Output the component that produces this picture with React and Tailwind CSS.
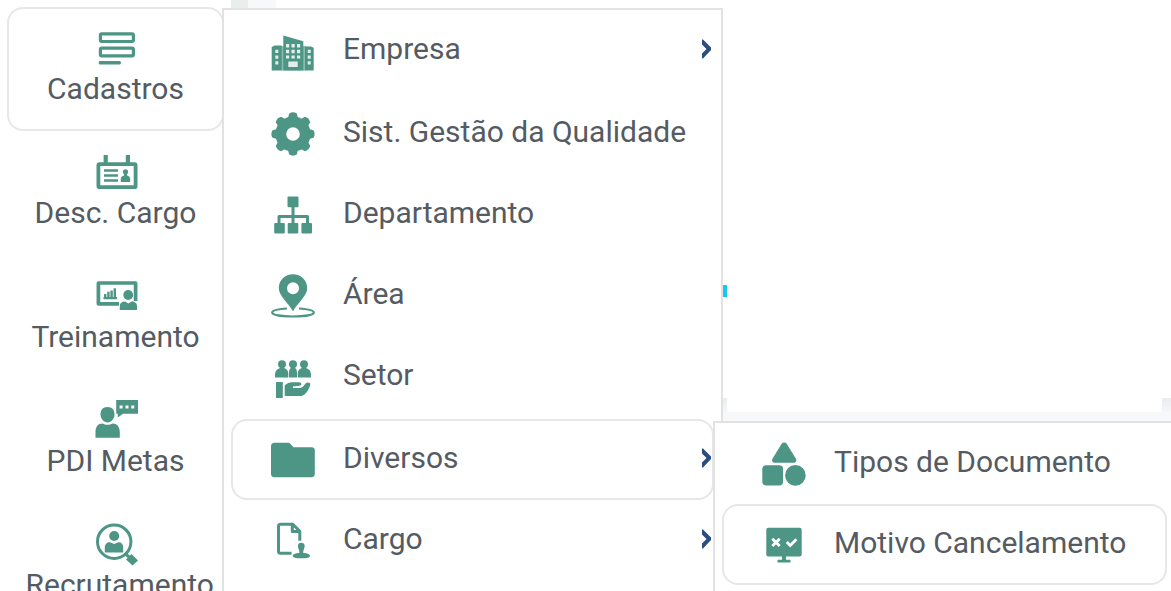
import React from "react";
import clsx from "clsx";

/* Icons share a 44x44 box and take the current text colour. */
function Icon({ children }) {
  return (
    <svg viewBox="0 0 44 44" className="size-11 shrink-0 text-[#4d9584]" fill="currentColor" aria-hidden="true">
      {children}
    </svg>
  );
}

const FormIcon = () => (
  <Icon>
    <g fill="none" stroke="currentColor" strokeWidth="3.2">
      <rect x="6.4" y="6.9" width="33" height="7.6" rx="1.4" />
      <rect x="6.4" y="21.2" width="33" height="7.6" rx="1.4" />
    </g>
    <rect x="4.8" y="34" width="22" height="3.4" rx="1.2" />
  </Icon>
);

const BadgeIcon = () => (
  <Icon>
    <rect x="4.4" y="13.2" width="37.2" height="23" rx="1" fill="none" stroke="currentColor" strokeWidth="3.8" />
    <path d="M9.6 4h4.2v8H9.6zM31.8 4H36v8h-4.2z" />
    <path d="M10 19.5h14M10 24.5h14M10 29.5h14" stroke="currentColor" strokeWidth="2.6" />
    <circle cx="31.5" cy="20.8" r="2.6" />
    <path d="M30 22h3v2.500c2 .3 3.200 1.600 3.200 3.600v3h-9.400v-3c0-2 1.200-3.300 3.200-3.600z" />
  </Icon>
);

const TrainingIcon = () => (
  <Icon>
    <path d="M25 28.800H4.400V8h37.200v18" fill="none" stroke="currentColor" strokeWidth="3.700" strokeLinejoin="round" />
    <path d="M9.500 22h13.500v2.200H9.500zM10 19h2.400v4H10zM13.200 16.800h2.400v6h-2.400zM16.400 15.500h2.400v8h-2.400zM19.600 13.300H22v10h-2.400z" />
    <circle cx="34.200" cy="20" r="4.900" />
    <path d="M25.800 35v-4c0-3 2-4.600 5.200-4.600l3.300 2 3.300-2c3.200 0 5.400 1.600 5.400 4.600v4z" />
  </Icon>
);

const GoalsIcon = () => (
  <Icon>
    <path d="M13.500 8c5 0 7 3 7 7.500 0 4-3.200 8-7 8s-7-4-7-8C6.500 11 8.500 8 13.500 8z" />
    <path d="M1.500 38.700v-5.500c0-5.500 2.500-8.700 7-8.700 3 1.800 7 1.800 10 0 4.500 0 7.300 3.200 7.300 8.700v5.500z" />
    <path d="M22.200 1H44v13.700H29L23.800 18.500v-3.800h-1.600z" />
    <path d="M25.600 6.600h3v3h-3zM31.500 6.600h3v3h-3zM37.300 6.600h3v3h-3z" fill="#fff" />
  </Icon>
);

const RecruitIcon = () => (
  <Icon>
    <circle cx="20.200" cy="18.700" r="16.700" fill="none" stroke="currentColor" strokeWidth="3" />
    <circle cx="20.200" cy="13" r="5" />
    <path d="M10.800 29.500v-5c0-3.200 2-5.200 5.200-5.200l4.200 1.800 4.200-1.800c3.200 0 4.800 2 4.800 5.200v5z" />
    <path d="M31 30.500l4 3.500" stroke="currentColor" strokeWidth="3" />
    <path d="M37.500 31l6.500 6.500-5.500 5-6.500-6z" />
  </Icon>
);

const CompanyIcon = () => (
  <Icon>
    <path d="M10 17h25v24.500H10z" opacity=".65" />
    <path d="M.7 18l3-1.500h7v25h-10zM12.300 6.500l20 5.700v29.300h-20zM34 17.500h6l2.700 1.200v22.800H34z" />
    <path
      d="M15 15h3.200v3.500H15zM20.500 15h3.200v3.500h-3.200zM26 15h3.200v3.500H26zM15 20.700h3.200v3.500H15zM20.500 20.700h3.200v3.500h-3.200zM26 20.700h3.200v3.500H26zM15 26.400h3.200v3H15zM20.500 26.400h3.200v3h-3.200zM26 26.400h3.200v3H26zM17.300 32.500h9.400v5.500h-9.400z"
      fill="#e3efec"
    />
    <path
      d="M4.300 20.700h3v3.300h-3zM4.300 26.500h3v3.300h-3zM4.300 32.300h3v3.300h-3zM36.700 20.700h3v3.300h-3zM36.700 26.500h3v3.300h-3zM36.700 32.300h3v3.300h-3z"
      fill="#e3efec"
    />
  </Icon>
);

const GearIcon = () => (
  <Icon>
    <circle cx="22" cy="22" r="12.200" fill="none" stroke="currentColor" strokeWidth="10.800" />
    {[0, 45, 90, 135, 180, 225, 270, 315].map((deg) => (
      <path key={deg} d="M18.200 1.500Q22-.8 25.800 1.500L27.500 8h-11z" transform={`rotate(${deg} 22 22)`} />
    ))}
  </Icon>
);

const DepartmentIcon = () => (
  <Icon>
    <path d="M22 13v18M8 31v-7.500h28.500V31" fill="none" stroke="currentColor" strokeWidth="3" strokeLinejoin="round" />
    <rect x="16.500" y="3.500" width="11" height="10.800" rx="1" />
    <rect x="3.200" y="30" width="10.600" height="10.600" rx="1" />
    <rect x="16.700" y="30" width="10.600" height="10.600" rx="1" />
    <rect x="30.400" y="30" width="10.600" height="10.600" rx="1" />
  </Icon>
);

const AreaIcon = () => (
  <Icon>
    <path
      fillRule="evenodd"
      d="M22 .3c8 0 14.200 6 14.200 13.700C36.200 22 27 28.500 22 37.300 17 28.500 7.800 22 7.800 14 7.800 6.300 14 .3 22 .3zM22 8.200a6 6 0 1 0 0 12 6 6 0 0 0 0-12z"
    />
    <path d="M16 34.500C8 35 1.200 36.300 1.200 38.500c0 2.500 9.500 4 20.800 4s20.800-1.500 20.800-4c0-2.200-6.800-3.500-14.800-4" fill="none" stroke="currentColor" strokeWidth="2.200" />
  </Icon>
);

const SectorIcon = () => (
  <Icon>
    {[11, 22, 33].map((x) => (
      <circle key={x} cx={x} cy="9.200" r="4" />
    ))}
    <path d="M4 22.500v-3c0-3.500 2-5.500 5-6.500V11h4v2c2.500.8 4.300 2.500 4.300 5.500v4zM18 22.500v-4.200c0-2.800.4-4.500 2-5.300V11h4v2c1.600.8 2 2.500 2 5.300v4.200zM26.700 22.500v-4c0-3 1.800-4.700 4.300-5.500V11h4v2c3 1 5 3 5 6.500v3z" />
    <rect x="5" y="27" width="6.800" height="16" rx=".6" />
    <path d="M13.700 30.500c2.500-2.500 4.500-3.300 7.500-3.300h7c2.500 0 3 3.300.2 3.600l-6.400.7v1.400h7c4 0 4.500-5.400 8-5.400 2 0 2.700 1.200 2 3.200-2.500 7-6 10.300-10.500 10.300H13.700z" />
  </Icon>
);

const FolderIcon = () => (
  <Icon>
    <path d="M3.500 4.800h13.200c1.200 0 2 .4 2.800 1.200l3 3.200h18.200c2 0 3.100 1.200 3.100 3.100v23.700c0 2-1.200 3.200-3.100 3.200H3.200C1.200 39.200 0 38 0 36V8.300c0-2.200 1.300-3.500 3.500-3.500z" />
  </Icon>
);

const RoleIcon = () => (
  <Icon>
    <path d="M20.500 34.300H9.500c-1.300 0-2-.7-2-2V7.300c0-1.300.7-2 2-2h12.300l7 7v9.500M21.300 5.500v7h7.500" fill="none" stroke="currentColor" strokeWidth="3" strokeLinejoin="round" />
    <path d="M30.300 23.700c2.200 0 3.600 1.600 3.400 3.800-.2 2-1.500 3-1.500 6.500 4 .2 6.800 1.300 6.800 3 0 1.500-3.500 2.300-8.700 2.300s-8.600-.8-8.600-2.300c0-1.700 2.800-2.800 6.700-3 0-3.500-1.300-4.500-1.500-6.500-.2-2.200 1.200-3.800 3.400-3.800z" />
  </Icon>
);

const ShapesIcon = () => (
  <Icon>
    <path d="M19.500 2c1.300-2 4-2 5.300 0l9 14.500c1.300 2.200 0 4.300-2.500 4.300H13c-2.500 0-3.700-2.100-2.400-4.300z" />
    <rect x=".3" y="23.200" width="20.800" height="20.400" rx="4" />
    <circle cx="33.400" cy="33.400" r="10.300" />
  </Icon>
);

const MonitorIcon = () => (
  <Icon>
    <path d="M6.500 4.800h31c1.400 0 2.200.8 2.200 2.200v24.300c0 1.400-.8 2.200-2.200 2.200H24v3.300h4.500v2.700h-13v-2.700H20v-3.300H6.500c-1.400 0-2.200-.8-2.200-2.200V7c0-1.400.8-2.200 2.200-2.200z" />
    <path d="M10.300 15.800l7.400 7.200M17.700 15.800L10.300 23M24.800 19l3.400 3.500 6.300-6.300" fill="none" stroke="#fff" strokeWidth="2.800" />
  </Icon>
);

const Chevron = () => (
  <svg viewBox="0 0 10 20" className="h-5 w-2.5 shrink-0" fill="#2b4c7e" aria-hidden="true">
    <path d="M0 .5h1L9 8.500v2.500L1 19.500H0V14.500L4.500 10 0 5.500z" />
  </svg>
);

const SIDEBAR = [
  { label: "Cadastros", icon: FormIcon, active: true },
  { label: "Desc. Cargo", icon: BadgeIcon },
  { label: "Treinamento", icon: TrainingIcon },
  { label: "PDI Metas", icon: GoalsIcon },
  { label: "Recrutamento", icon: RecruitIcon },
];

const CADASTROS = [
  [{ label: "Empresa", icon: CompanyIcon, hasSub: true }],
  [
    { label: "Sist. Gestão da Qualidade", icon: GearIcon },
    { label: "Departamento", icon: DepartmentIcon },
    { label: "Área", icon: AreaIcon },
    { label: "Setor", icon: SectorIcon },
  ],
  [
    { label: "Diversos", icon: FolderIcon, hasSub: true, active: true },
    { label: "Cargo", icon: RoleIcon, hasSub: true },
  ],
];

const DIVERSOS = [
  { label: "Tipos de Documento", icon: ShapesIcon },
  { label: "Motivo Cancelamento", icon: MonitorIcon, active: true },
];

function MenuRow({ item }) {
  const ItemIcon = item.icon;
  return (
    <button
      type="button"
      aria-haspopup={item.hasSub ? "menu" : undefined}
      className={clsx(
        "flex h-[81px] w-full items-center gap-7 rounded-2xl border-2 pl-[38px] text-left",
        item.active ? "border-[#e6e7ea]" : "border-transparent"
      )}
    >
      <ItemIcon />
      <span className="flex flex-1 items-center justify-between pb-[3px] whitespace-nowrap">
        {item.label}
        {item.hasSub && <Chevron />}
      </span>
    </button>
  );
}

export default function App() {
  return (
    <div className="relative flex h-screen overflow-hidden bg-white font-['Roboto',sans-serif] text-[30px] leading-9 text-[#555b62]">
      <nav className="w-[231px] shrink-0 px-[7px] pt-[7px]" aria-label="Principal">
        {SIDEBAR.map(({ label, icon: ItemIcon, active }) => (
          <button
            key={label}
            type="button"
            className={clsx(
              "flex h-[124px] w-full flex-col items-center rounded-2xl border-2 pt-[18px]",
              active ? "border-[#e6e7ea]" : "border-transparent"
            )}
          >
            <ItemIcon />
            <span className="w-45 whitespace-nowrap">{label}</span>
          </button>
        ))}
      </nav>

      <div className="w-[17px] shrink-0 bg-[#e9eeed]" />

      <main className="flex flex-1 flex-col bg-[#f7f8fa]">
        <div className="ml-7 h-[398px] bg-white pt-[285px]">
          <div className="h-3 w-[451px] bg-[#16c8f0]" />
        </div>
        <div className="h-3.5 bg-linear-to-b from-[#ebecef] to-[#f5f6f8] pr-[9px] pl-[479px]">
          <div className="h-full bg-white" />
        </div>
      </main>

      <div className="absolute top-2 bottom-0 left-[222px] w-[501px] border-2 border-b-0 border-[#e2e2e2] bg-white px-[7px]">
        <div className="flex flex-col gap-0.5">
          {CADASTROS.map((group) => (
            <div key={group[0].label}>
              {group.map((item) => (
                <MenuRow key={item.label} item={item} />
              ))}
            </div>
          ))}
        </div>
      </div>

      <div className="absolute top-[421px] right-0 bottom-0 left-[713px] border-t-2 border-l-2 border-[#e2e2e2] bg-white pr-1 pl-[7px]">
        {DIVERSOS.map((item) => (
          <MenuRow key={item.label} item={item} />
        ))}
      </div>
    </div>
  );
}
